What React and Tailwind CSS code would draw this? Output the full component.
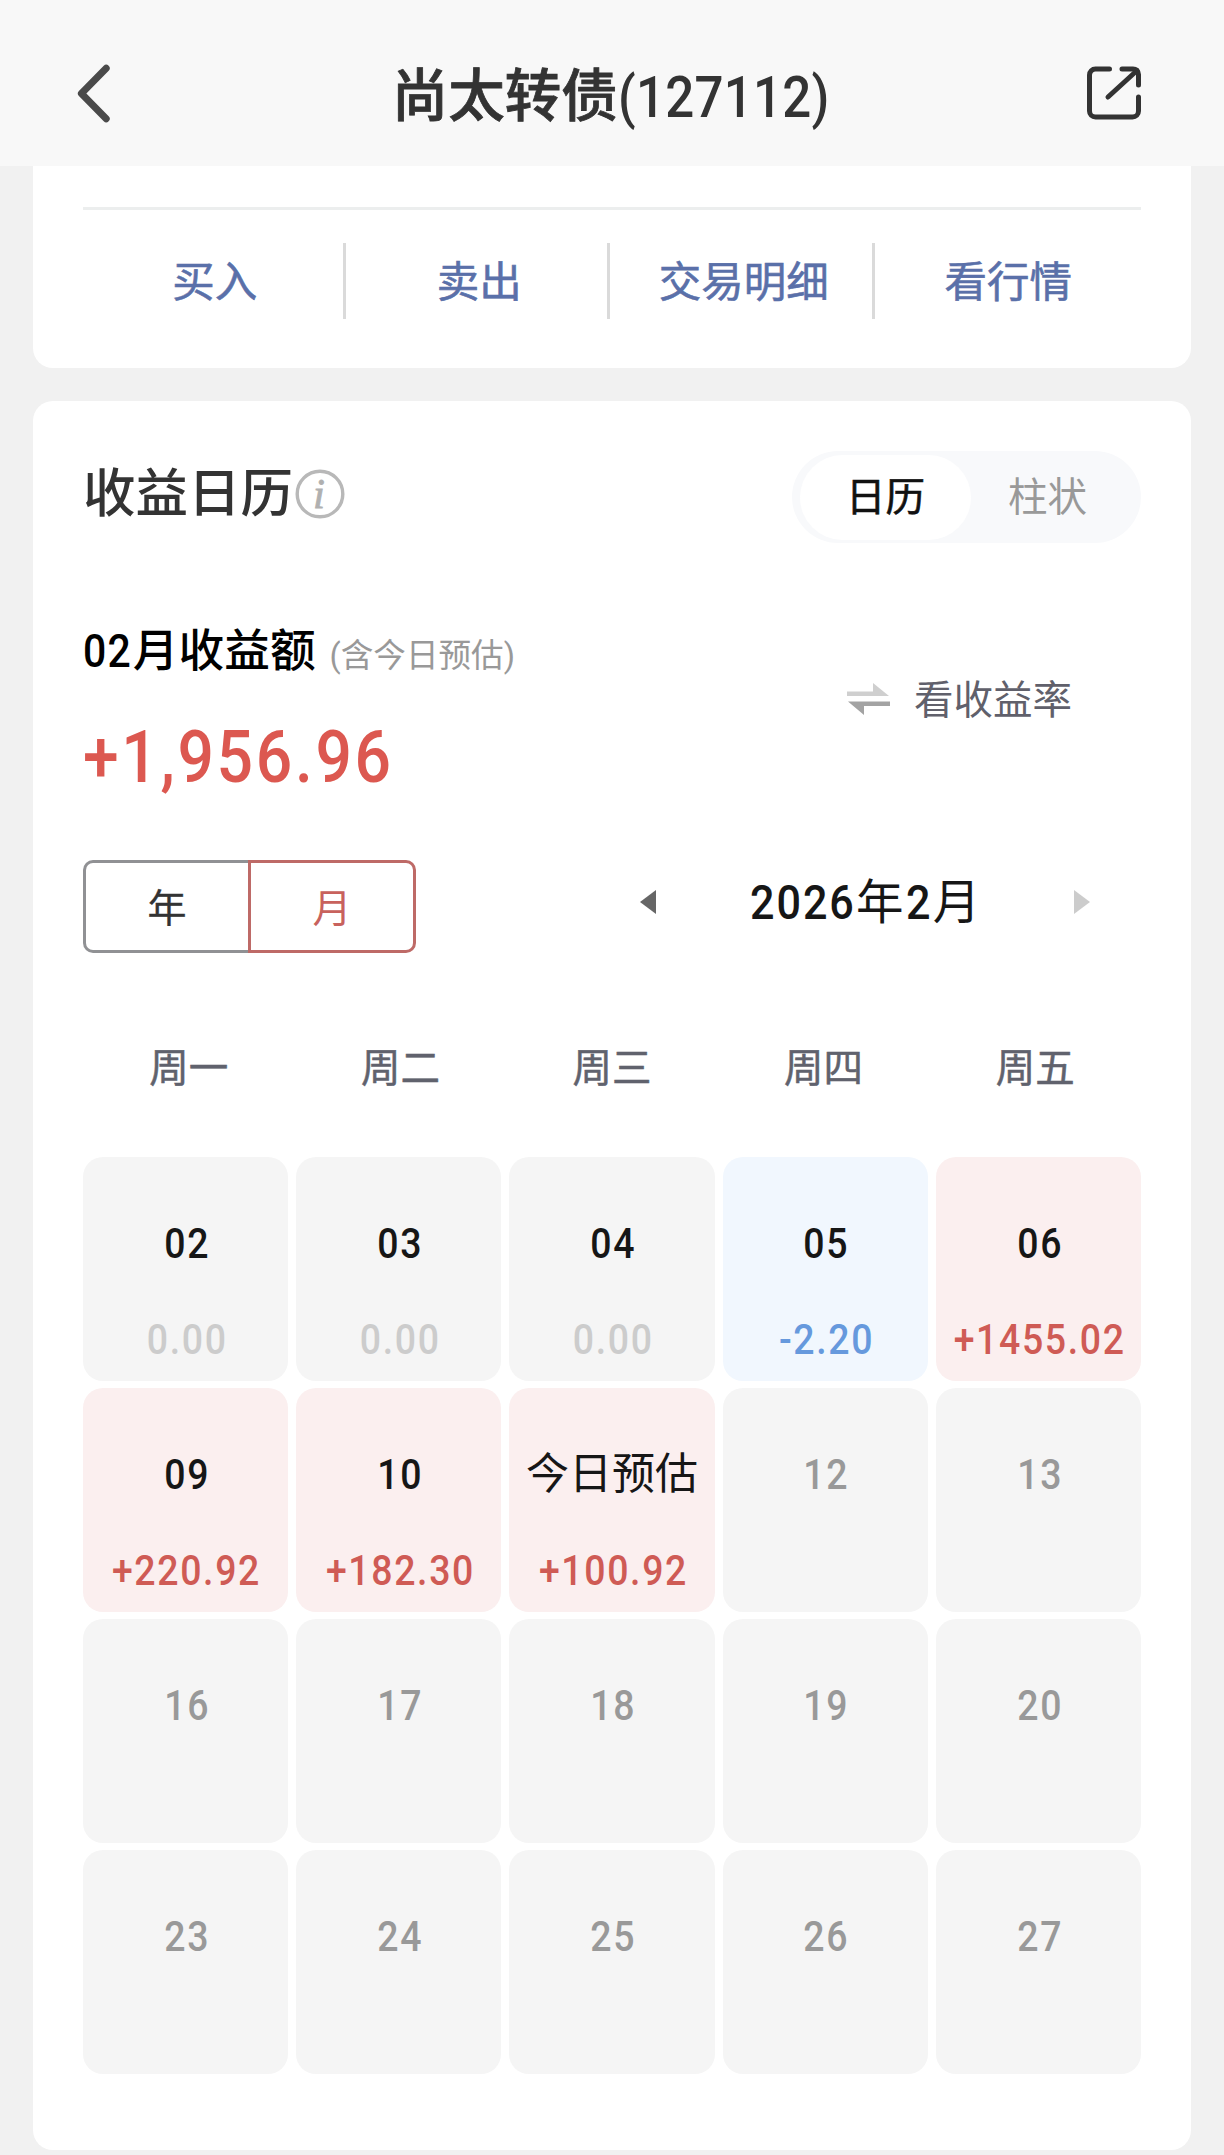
const actions = ["买入", "卖出", "交易明细", "看行情"];
const weekdays = ["周一", "周二", "周三", "周四", "周五"];

const days = [
  { label: "02", profit: "0.00", tone: "flat" },
  { label: "03", profit: "0.00", tone: "flat" },
  { label: "04", profit: "0.00", tone: "flat" },
  { label: "05", profit: "-2.20", tone: "down" },
  { label: "06", profit: "+1455.02", tone: "up" },
  { label: "09", profit: "+220.92", tone: "up" },
  { label: "10", profit: "+182.30", tone: "up" },
  { label: "今日预估", profit: "+100.92", tone: "up" },
  { label: "12" },
  { label: "13" },
  { label: "16" },
  { label: "17" },
  { label: "18" },
  { label: "19" },
  { label: "20" },
  { label: "23" },
  { label: "24" },
  { label: "25" },
  { label: "26" },
  { label: "27" }
];

const tones = {
  flat: { cell: "bg-[#f5f5f5]", profit: "text-[#cccccc]" },
  up: { cell: "bg-[#fbefef]", profit: "text-[#cf5b55]" },
  down: { cell: "bg-[#f1f7fe]", profit: "text-[#6699dd]" }
};

// narrow DIN-like figures
const figures = "inline-block scale-x-[0.87] pl-[3px] font-medium tracking-[1.9px]";

function BackIcon() {
  return (
    <svg className="h-[60px] w-9" viewBox="0 0 36 60" fill="none" stroke="#4a4a4a" strokeWidth="7" strokeLinecap="round" strokeLinejoin="round">
      <path d="M30.2 5.2 5.4 30.5l24.8 25.3" />
    </svg>
  );
}

function ShareIcon() {
  return (
    <svg className="h-[54px] w-[54px]" viewBox="0 0 54 54" fill="none" stroke="#333" strokeWidth="5" strokeLinecap="round" strokeLinejoin="round">
      <path d="M22.5 3H8.5a6 6 0 0 0-6 6v36a6 6 0 0 0 6 6h37a6 6 0 0 0 6-6V31" />
      <path d="M35 3h11a5.5 5.5 0 0 1 5.5 5.500V19" />
      <path d="M21 31 50 4.500" />
    </svg>
  );
}

function InfoIcon() {
  return (
    <svg className="h-[50px] w-[50px]" viewBox="0 0 50 50">
      <circle cx="25" cy="25" r="22.8" fill="none" stroke="#b8b8b8" strokeWidth="3.4" />
      <text x="24" y="39" textAnchor="middle" fontSize="43" fontStyle="italic" fontFamily="Liberation Serif, serif" fill="#b0b0b0" stroke="#b0b0b0" strokeWidth="0.8">i</text>
    </svg>
  );
}

function SwapIcon() {
  return (
    <svg className="mb-[5px] h-8 w-[43px]" viewBox="0 0 43 32">
      <path d="M0 8.500h26V0l16 13H0z" fill="#cfcfcf" />
      <path d="M43 23H17v9L1 18.500h42z" fill="#a3a3a3" />
    </svg>
  );
}

function DayCell({ label, profit, tone }) {
  const style = tones[tone];
  return (
    <div className={`flex h-[224px] flex-col items-center rounded-[20px] pt-[56px] ${style ? style.cell : "bg-[#f5f5f5]"}`}>
      <span className={`text-[43px] leading-[60px] whitespace-nowrap ${style ? "text-[#161616]" : "text-[#999999]"} ${label.length > 2 ? "font-normal" : figures}`}>
        {label}
      </span>
      {profit ? <span className={`mt-9 text-[43px] leading-[60px] ${figures} ${style.profit}`}>{profit}</span> : null}
    </div>
  );
}

export default function App() {
  return (
    <div className="h-[2155px] w-[1224px] overflow-hidden bg-[#f1f1f1] font-['Roboto','Noto_Sans_CJK_SC',sans-serif]">
      <header className="flex h-[166px] items-center justify-between bg-[#f8f8f8] pt-5 pr-[83px] pl-[76px]">
        <BackIcon />
        <h1 className="flex pt-[7px] pl-[22px] text-[56.5px] leading-[70px] font-medium text-[#333]">
          <span className="[-webkit-text-stroke:0.8px]">尚太转债</span>
          <span className="mr-[-29px] origin-left scale-x-[0.88] text-[58px] tracking-[0.3px]">(127112)</span>
        </h1>
        <ShareIcon />
      </header>

      <section className="mx-[33px] h-[202px] rounded-b-[20px] bg-white px-[50px] pt-[41px]">
        <div className="h-[3px] bg-[#eceeee]" />
        <div className="mt-[33px] grid grid-cols-4">
          {actions.map((action, i) => (
            <div key={action} className="flex h-[76px] items-center">
              <span className="flex-1 pt-[3px] pl-[4px] text-center text-[42.5px] leading-[60px] whitespace-nowrap text-[#5a70a9] [-webkit-text-stroke:0.6px]">{action}</span>
              <i className={`mr-[2px] h-full w-[3px] ${i < 3 ? "bg-[#dadada]" : "bg-white"}`} />
            </div>
          ))}
        </div>
      </section>

      <section className="mx-[33px] mt-[33px] h-[1749px] rounded-[20px] bg-white px-[50px] pt-[50px]">
        <div className="flex h-[92px] items-center justify-between">
          <div className="flex items-center">
            <h2 className="pb-[7px] text-[52.5px] leading-[70px] font-medium text-[#333]">收益日历</h2>
            <div className="pb-[6px] pl-[2px]">
              <InfoIcon />
            </div>
          </div>
          <div className="flex h-[92px] w-[349px] items-center rounded-full bg-[#f8f9fb] pl-2 text-[39.5px] leading-[60px]">
            <div className="flex h-[85px] w-[171px] items-center justify-center rounded-full bg-white pt-[2px] text-[#111] [-webkit-text-stroke:0.6px]">日历</div>
            <div className="flex-1 pt-[2px] pr-[17px] text-center text-[#999]">柱状</div>
          </div>
        </div>

        <div className="mt-[73px] flex justify-between pr-[69px]">
          <div>
            <div className="flex items-baseline leading-[70px]">
              <span className="mr-[-6px] origin-left scale-x-[0.88] text-[46.5px] font-medium tracking-[1.5px] text-black">02</span>
              <span className="text-[45.7px] font-medium text-black">月收益额</span>
              <span className="pl-[14px] text-[32.6px] text-[#999]">(含今日预估)</span>
            </div>
            <div className="mt-[22px] origin-left scale-x-[0.88] text-[73px] leading-[88px] font-medium tracking-[3px] text-[#dc5850]">+1,956.96</div>
          </div>
          <div className="mt-[55px] flex h-[60px] items-center gap-6">
            <SwapIcon />
            <span className="text-[39.5px] leading-[60px] text-[#60606b]">看收益率</span>
          </div>
        </div>

        <div className="mt-[59px] flex h-[93px] items-center justify-between pr-[51px]">
          <div className="flex h-[93px] w-[333px] text-[39px] leading-[92px]">
            <div className="w-[165px] rounded-l-[10px] border-[3px] border-r-0 border-[#909194] pr-1 pl-1 text-center text-[#333] [-webkit-text-stroke:0.3px]">年</div>
            <div className="w-[168px] rounded-r-[10px] border-[3px] border-[#be6a67] text-center text-[#c8625d]">月</div>
          </div>
          <div className="flex w-[450px] items-center justify-between pb-[10px]">
            <svg className="h-6 w-4" viewBox="0 0 16 24">
              <path d="M16 0v24L0 12z" fill="#666" />
            </svg>
            <div className="flex pt-[3px] text-[47.5px] leading-[60px] text-[#161616]">
              <span className="mr-[-14px] origin-left scale-x-[0.88] text-[49px] font-medium tracking-[2.2px]">2026</span>
              <span>年</span>
              <span className="mr-[-3px] ml-[2px] origin-left scale-x-[0.88] text-[49px] font-medium tracking-[2.2px]">2</span>
              <span>月</span>
            </div>
            <svg className="h-6 w-4" viewBox="0 0 16 24">
              <path d="M0 0v24l16-12z" fill="#ccc" />
            </svg>
          </div>
        </div>

        <div className="mt-[86px] grid grid-cols-5 text-center text-[39.5px] leading-[60px] text-[#60626d] [-webkit-text-stroke:0.5px]">
          {weekdays.map((day) => (
            <span key={day}>{day}</span>
          ))}
        </div>

        <div className="mt-[58px] grid grid-cols-5 gap-x-2 gap-y-[7px]">
          {days.map((day) => (
            <DayCell key={day.label} {...day} />
          ))}
        </div>
      </section>
    </div>
  );
}
